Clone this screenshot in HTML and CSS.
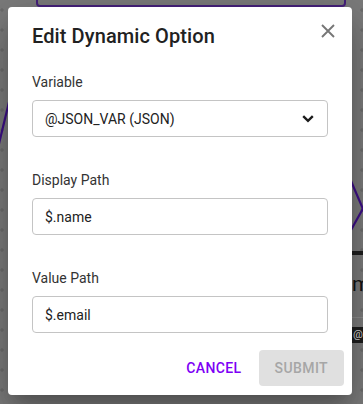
FILE: index.html
```html
<!DOCTYPE html>
<html lang="en">
<head>
<meta charset="utf-8">
<title>Edit Dynamic Option</title>
<link rel="stylesheet" href="styles.css">
</head>
<body>
<div class="canvas">
  <div class="node node-top"></div>
  <svg class="wires" width="363" height="404" viewBox="0 0 363 404">
    <line x1="9" y1="102" x2="-3" y2="152" />
    <line x1="351" y1="181" x2="366" y2="216" />
    <line x1="351" y1="230" x2="366" y2="203" />
  </svg>
  <div class="node node-right">
    <div class="node-title">m</div>
    <div class="node-rule"></div>
    <div class="node-tag">@S</div>
  </div>
</div>

<div class="dialog" role="dialog">
  <div class="dialog-header">
    <h2 class="dialog-title">Edit Dynamic Option</h2>
    <button class="close-btn" aria-label="Close">
      <svg width="14" height="14" viewBox="0 0 14 14"><path d="M1 1 L13 13 M13 1 L1 13" /></svg>
    </button>
  </div>
  <div class="dialog-content">
    <div class="field">
      <label class="field-label">Variable</label>
      <div class="box select">
        <span class="box-text">@JSON_VAR (JSON)</span>
        <svg class="chevron" width="12" height="8" viewBox="0 0 12 8"><path d="M1.2 1.2 L6 5.8 L10.8 1.2" /></svg>
      </div>
    </div>
    <div class="field">
      <label class="field-label">Display Path</label>
      <div class="box"><span class="box-text">$.name</span></div>
    </div>
    <div class="field">
      <label class="field-label">Value Path</label>
      <div class="box"><span class="box-text">$.email</span></div>
    </div>
  </div>
  <div class="dialog-actions">
    <button class="btn btn-text">CANCEL</button>
    <button class="btn btn-disabled" disabled>SUBMIT</button>
  </div>
</div>
</body>
</html>
```

FILE: styles.css
```css
* { box-sizing: border-box; }

html, body {
  margin: 0;
  padding: 0;
}

body {
  width: 363px;
  height: 404px;
  overflow: hidden;
  position: relative;
  font-family: Roboto, "Liberation Sans", Arial, sans-serif;
  background-color: #7b7b7b;
  background-image: radial-gradient(circle, #6c6c6c 1.4px, transparent 1.9px);
  background-size: 20px 20px;
  background-position: -8px 0;
}

.canvas {
  position: absolute;
  inset: 0;
  overflow: hidden;
}

.wires {
  position: absolute;
  left: 0;
  top: 0;
}

.wires line {
  stroke: #3d0f86;
  stroke-width: 2.2;
}

.node {
  position: absolute;
}

.node-top {
  left: 36px;
  top: -40px;
  width: 310px;
  height: 47px;
  border: 2px solid #44207a;
  border-radius: 4px;
  background: #7a7a7a;
}

.node-right {
  left: 352px;
  top: 251px;
  width: 60px;
  height: 100px;
  border-top: 4px solid #1e1e1e;
}

.node-title {
  font-size: 21px;
  line-height: 24px;
  margin-top: 17px;
  color: #141414;
  white-space: nowrap;
}

.node-rule {
  height: 1px;
  background: #8c8c8c;
  margin-top: 21px;
}

.node-tag {
  margin-top: 9px;
  display: inline-block;
  background: #1d1d1d;
  color: #d8d8d8;
  font-size: 11px;
  line-height: 16px;
  padding: 0 1px;
  white-space: nowrap;
}

.dialog {
  position: relative;
  z-index: 1;
  margin: 7px 0 0 8px;
  width: 344px;
  height: 388px;
  background: #fff;
  border-radius: 4px;
  display: flex;
  flex-direction: column;
  box-shadow: 0 11px 15px -7px rgba(0,0,0,0.2), 0 24px 38px 3px rgba(0,0,0,0.14), 0 9px 46px 8px rgba(0,0,0,0.12);
}

.dialog-header {
  display: flex;
  justify-content: space-between;
  align-items: flex-start;
  padding: 13px 12px 0 24px;
}

.dialog-title {
  margin: 0;
  font-size: 20px;
  line-height: 32px;
  font-weight: 500;
  color: #212121;
  letter-spacing: 0.1px;
}

.close-btn {
  margin-top: -1px;
  width: 24px;
  height: 24px;
  padding: 0;
  border: 0;
  background: transparent;
  display: flex;
  align-items: center;
  justify-content: center;
}

.close-btn path {
  stroke: #767676;
  stroke-width: 1.9;
  fill: none;
}

.dialog-content {
  display: flex;
  flex-direction: column;
  gap: 33px;
  padding: 20px 24px 9px;
}

.field {
  display: flex;
  flex-direction: column;
}

.field-label {
  font-size: 14px;
  line-height: 20px;
  color: #333;
  margin-bottom: 8px;
}

.box {
  height: 37px;
  border: 1px solid #c4c4c4;
  border-radius: 4px;
  display: flex;
  align-items: center;
  justify-content: space-between;
  padding: 0 13px 0 12px;
}

.box-text {
  font-size: 14px;
  color: #222;
  padding-top: 1px;
}

.chevron path {
  stroke: #1c1c1c;
  stroke-width: 2.4;
  fill: none;
}

.dialog-actions {
  display: flex;
  justify-content: flex-end;
  align-items: center;
  gap: 9px;
  padding: 8px;
}

.btn {
  font-family: Roboto, "Liberation Sans", Arial, sans-serif;
  font-size: 14px;
  font-weight: 500;
  letter-spacing: 0.4px;
  height: 36px;
  border: 0;
  border-radius: 4px;
  background: transparent;
  padding: 0 8px;
}

.btn-text {
  color: #7d00f5;
}

.btn-disabled {
  background: #e0e0e0;
  color: #a6a6a6;
  padding: 0 16px;
  min-width: 85px;
}
```
